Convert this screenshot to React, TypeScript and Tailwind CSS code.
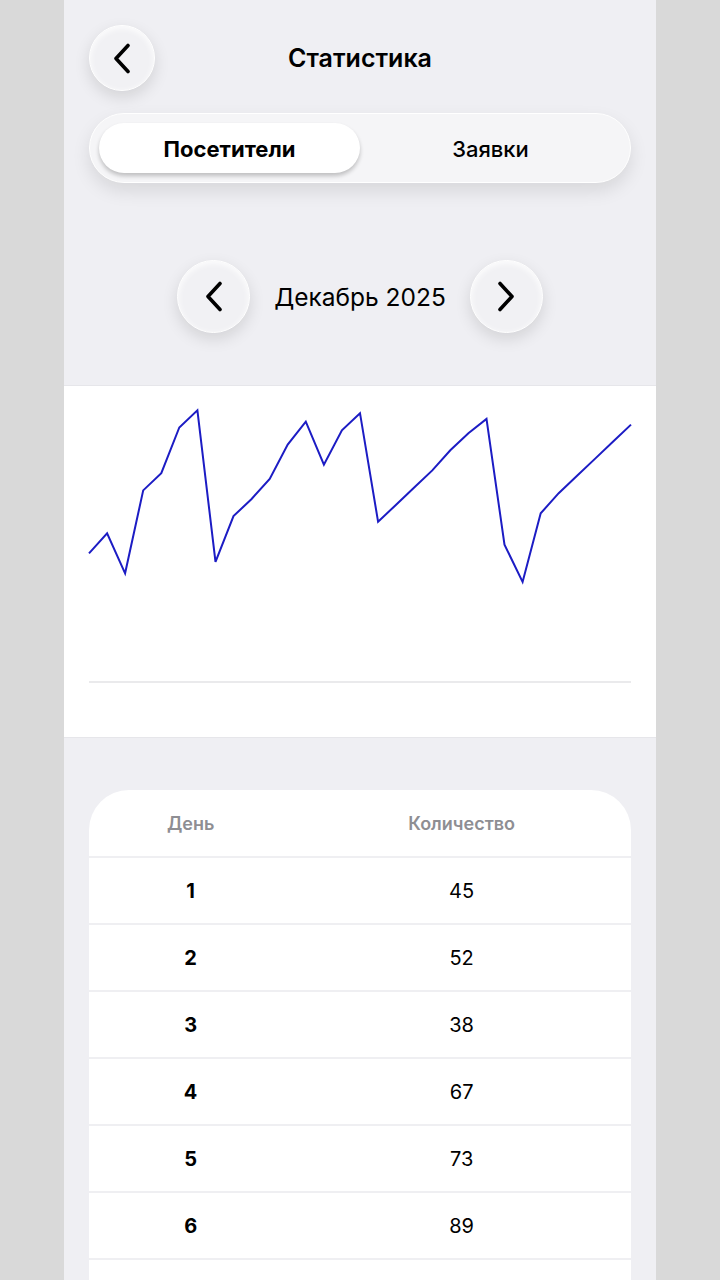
import { ReactNode } from 'react'

const days = [
  45, 52, 38, 67, 73, 89, 95, 42, 58, 64, 71, 83, 91, 76, 88, 94,
  56, 62, 68, 74, 81, 87, 92, 48, 35, 59, 66, 72, 78, 84, 90,
]

function Chevron({ dir }: { dir: 'left' | 'right' }) {
  return (
    <svg width="18" height="31" viewBox="0 0 18 31" fill="none">
      <path
        d={dir === 'left' ? 'M15 2.5 3 15.5 15 28.5' : 'M3 2.5 15 15.5 3 28.5'}
        stroke="#000"
        strokeWidth="3.6"
        strokeLinecap="round"
        strokeLinejoin="round"
      />
    </svg>
  )
}

function RoundButton({ size, children }: { size: string; children: ReactNode }) {
  return (
    <button
      className={`${size} shrink-0 flex items-center justify-center rounded-full border border-white bg-[#f1f1f4] shadow-[0_6px_16px_rgba(0,0,0,0.12),inset_0_2px_6px_rgba(255,255,255,0.9)]`}
    >
      {children}
    </button>
  )
}

function Chart() {
  const left = 25
  const right = 567
  const base = 296
  const top = 10
  const max = 100
  const step = (right - left) / (days.length - 1)
  const pts = days
    .map((v, i) => `${(left + i * step).toFixed(1)},${(base - (v / max) * (base - top)).toFixed(1)}`)
    .join(' ')
  return (
    <svg width="592" height="351" viewBox="0 0 592 351">
      <polyline points={pts} fill="none" stroke="#1c1cc4" strokeWidth="2" strokeLinejoin="miter" />
      <line x1={left} y1={base} x2={right} y2={base} stroke="#e3e3e6" strokeWidth="1.5" />
    </svg>
  )
}

export default function App() {
  return (
    <div
      className="min-h-screen bg-[#d9d9d9] flex justify-center"
      style={{ fontFamily: 'Inter, "Noto Sans", sans-serif' }}
    >
      <div className="w-[592px] bg-[#efeff3] min-h-screen">
        {/* Шапка */}
        <div className="relative flex items-center justify-center h-[66px] mt-[25px] px-[25px]">
          <div className="absolute left-[25px] top-0">
            <RoundButton size="w-[66px] h-[66px]">
              <Chevron dir="left" />
            </RoundButton>
          </div>
          <h1 className="text-[25px] font-semibold text-black pt-[2px]">Статистика</h1>
        </div>

        {/* Переключатель */}
        <div className="mx-[25px] mt-[22px] h-[70px] rounded-full border border-white bg-[#f5f5f7] shadow-[0_8px_18px_rgba(0,0,0,0.10)] p-[9px] grid grid-cols-2">
          <div className="rounded-full bg-white shadow-[0_3px_4px_rgba(0,0,0,0.22)] flex items-center justify-center text-[22px] font-bold text-black pt-[2px]">
            Посетители
          </div>
          <div className="flex items-center justify-center text-[22px] font-medium text-black pt-[2px]">
            Заявки
          </div>
        </div>

        {/* Месяц */}
        <div className="flex items-center justify-center gap-[24px] mt-[77px] h-[73px]">
          <RoundButton size="w-[73px] h-[73px]">
            <Chevron dir="left" />
          </RoundButton>
          <span className="text-[24.5px] leading-[30px] text-black whitespace-nowrap">Декабрь 2025</span>
          <RoundButton size="w-[73px] h-[73px]">
            <Chevron dir="right" />
          </RoundButton>
        </div>

        {/* График */}
        <div className="mt-[52px] bg-white border-t border-b border-[#e6e6ea]">
          <Chart />
        </div>

        {/* Таблица */}
        <div className="mx-[25px] mt-[52px] rounded-t-[40px] bg-white overflow-hidden">
          <div className="grid grid-cols-[3fr_5fr] h-[66px] items-center text-[18px] font-semibold text-[#8e8e93]">
            <div className="text-center">День</div>
            <div className="text-center">Количество</div>
          </div>
          {days.map((v, i) => (
            <div
              key={i}
              className="grid grid-cols-[3fr_5fr] h-[67px] items-center border-t-2 border-[#efeff2] text-[20px] text-black"
            >
              <div className="text-center font-bold">{i + 1}</div>
              <div className="text-center">{v}</div>
            </div>
          ))}
        </div>
      </div>
    </div>
  )
}
